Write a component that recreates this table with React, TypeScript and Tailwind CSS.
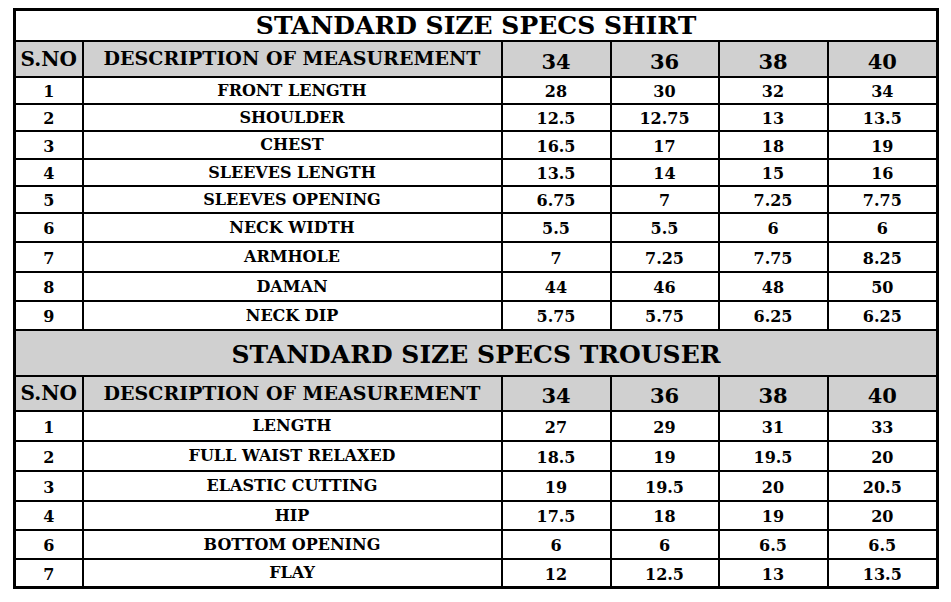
import React from "react";

const shirt: [string, string, string[]][] = [
  ["1", "FRONT LENGTH", ["28", "30", "32", "34"]],
  ["2", "SHOULDER", ["12.5", "12.75", "13", "13.5"]],
  ["3", "CHEST", ["16.5", "17", "18", "19"]],
  ["4", "SLEEVES LENGTH", ["13.5", "14", "15", "16"]],
  ["5", "SLEEVES OPENING", ["6.75", "7", "7.25", "7.75"]],
  ["6", "NECK WIDTH", ["5.5", "5.5", "6", "6"]],
  ["7", "ARMHOLE", ["7", "7.25", "7.75", "8.25"]],
  ["8", "DAMAN", ["44", "46", "48", "50"]],
  ["9", "NECK DIP", ["5.75", "5.75", "6.25", "6.25"]],
];
const shirtH = [27, 27, 28, 27, 27, 29, 30, 29, 29];

const trouser: [string, string, string[]][] = [
  ["1", "LENGTH", ["27", "29", "31", "33"]],
  ["2", "FULL WAIST RELAXED", ["18.5", "19", "19.5", "20"]],
  ["3", "ELASTIC CUTTING", ["19", "19.5", "20", "20.5"]],
  ["4", "HIP", ["17.5", "18", "19", "20"]],
  ["6", "BOTTOM OPENING", ["6", "6", "6.5", "6.5"]],
  ["7", "FLAY", ["12", "12.5", "13", "13.5"]],
];
const trouserH = [30, 30, 30, 29, 29, 29];

const cell = "border-2 border-black text-center p-0 align-middle leading-none";

function Header({ h }: { h: number }) {
  return (
    <tr className="bg-[#d0d0d0]" style={{ height: h }}>
      <td className={`${cell} text-[20px]`}>S.NO</td>
      <td className={`${cell} text-[19px]`}>DESCRIPTION OF MEASUREMENT</td>
      {["34", "36", "38", "40"].map((s) => (
        <td key={s} className={`${cell} text-[21px] pt-[5px]`}>
          {s}
        </td>
      ))}
    </tr>
  );
}

function Rows({ rows, hs }: { rows: [string, string, string[]][]; hs: number[] }) {
  return (
    <>
      {rows.map(([n, d, v], i) => (
        <tr key={d} className="bg-white" style={{ height: hs[i] }}>
          <td className={`${cell} text-[16px] pt-[4px]`}>{n}</td>
          <td className={`${cell} text-[16px] pt-[1px]`}>{d}</td>
          {v.map((x, j) => (
            <td key={j} className={`${cell} text-[16px] pt-[4px]`}>
              {x}
            </td>
          ))}
        </tr>
      ))}
    </>
  );
}

export default function App() {
  return (
    <div className="w-[951px] h-[602px] bg-white pt-2 pl-[13px]">
      <table
        className="border-collapse border-[3px] border-black text-black font-bold table-fixed w-[923px]"
        style={{ fontFamily: '"DejaVu Serif", "Liberation Serif", serif', fontVariantNumeric: "oldstyle-nums" }}
      >
        <colgroup>
          <col className="w-[68px]" />
          <col className="w-[419px]" />
          <col className="w-[109px]" />
          <col className="w-[108px]" />
          <col className="w-[109px]" />
          <col className="w-[110px]" />
        </colgroup>
        <tbody>
          <tr className="bg-white h-[31px]">
            <td colSpan={6} className={`${cell} text-[25px] pt-[1px]`}>
              STANDARD SIZE SPECS SHIRT
            </td>
          </tr>
          <Header h={36} />
          <Rows rows={shirt} hs={shirtH} />
          <tr className="bg-[#d0d0d0] h-[46px]">
            <td colSpan={6} className={`${cell} text-[25px] pt-[3px]`}>
              STANDARD SIZE SPECS TROUSER
            </td>
          </tr>
          <Header h={35} />
          <Rows rows={trouser} hs={trouserH} />
        </tbody>
      </table>
    </div>
  );
}
